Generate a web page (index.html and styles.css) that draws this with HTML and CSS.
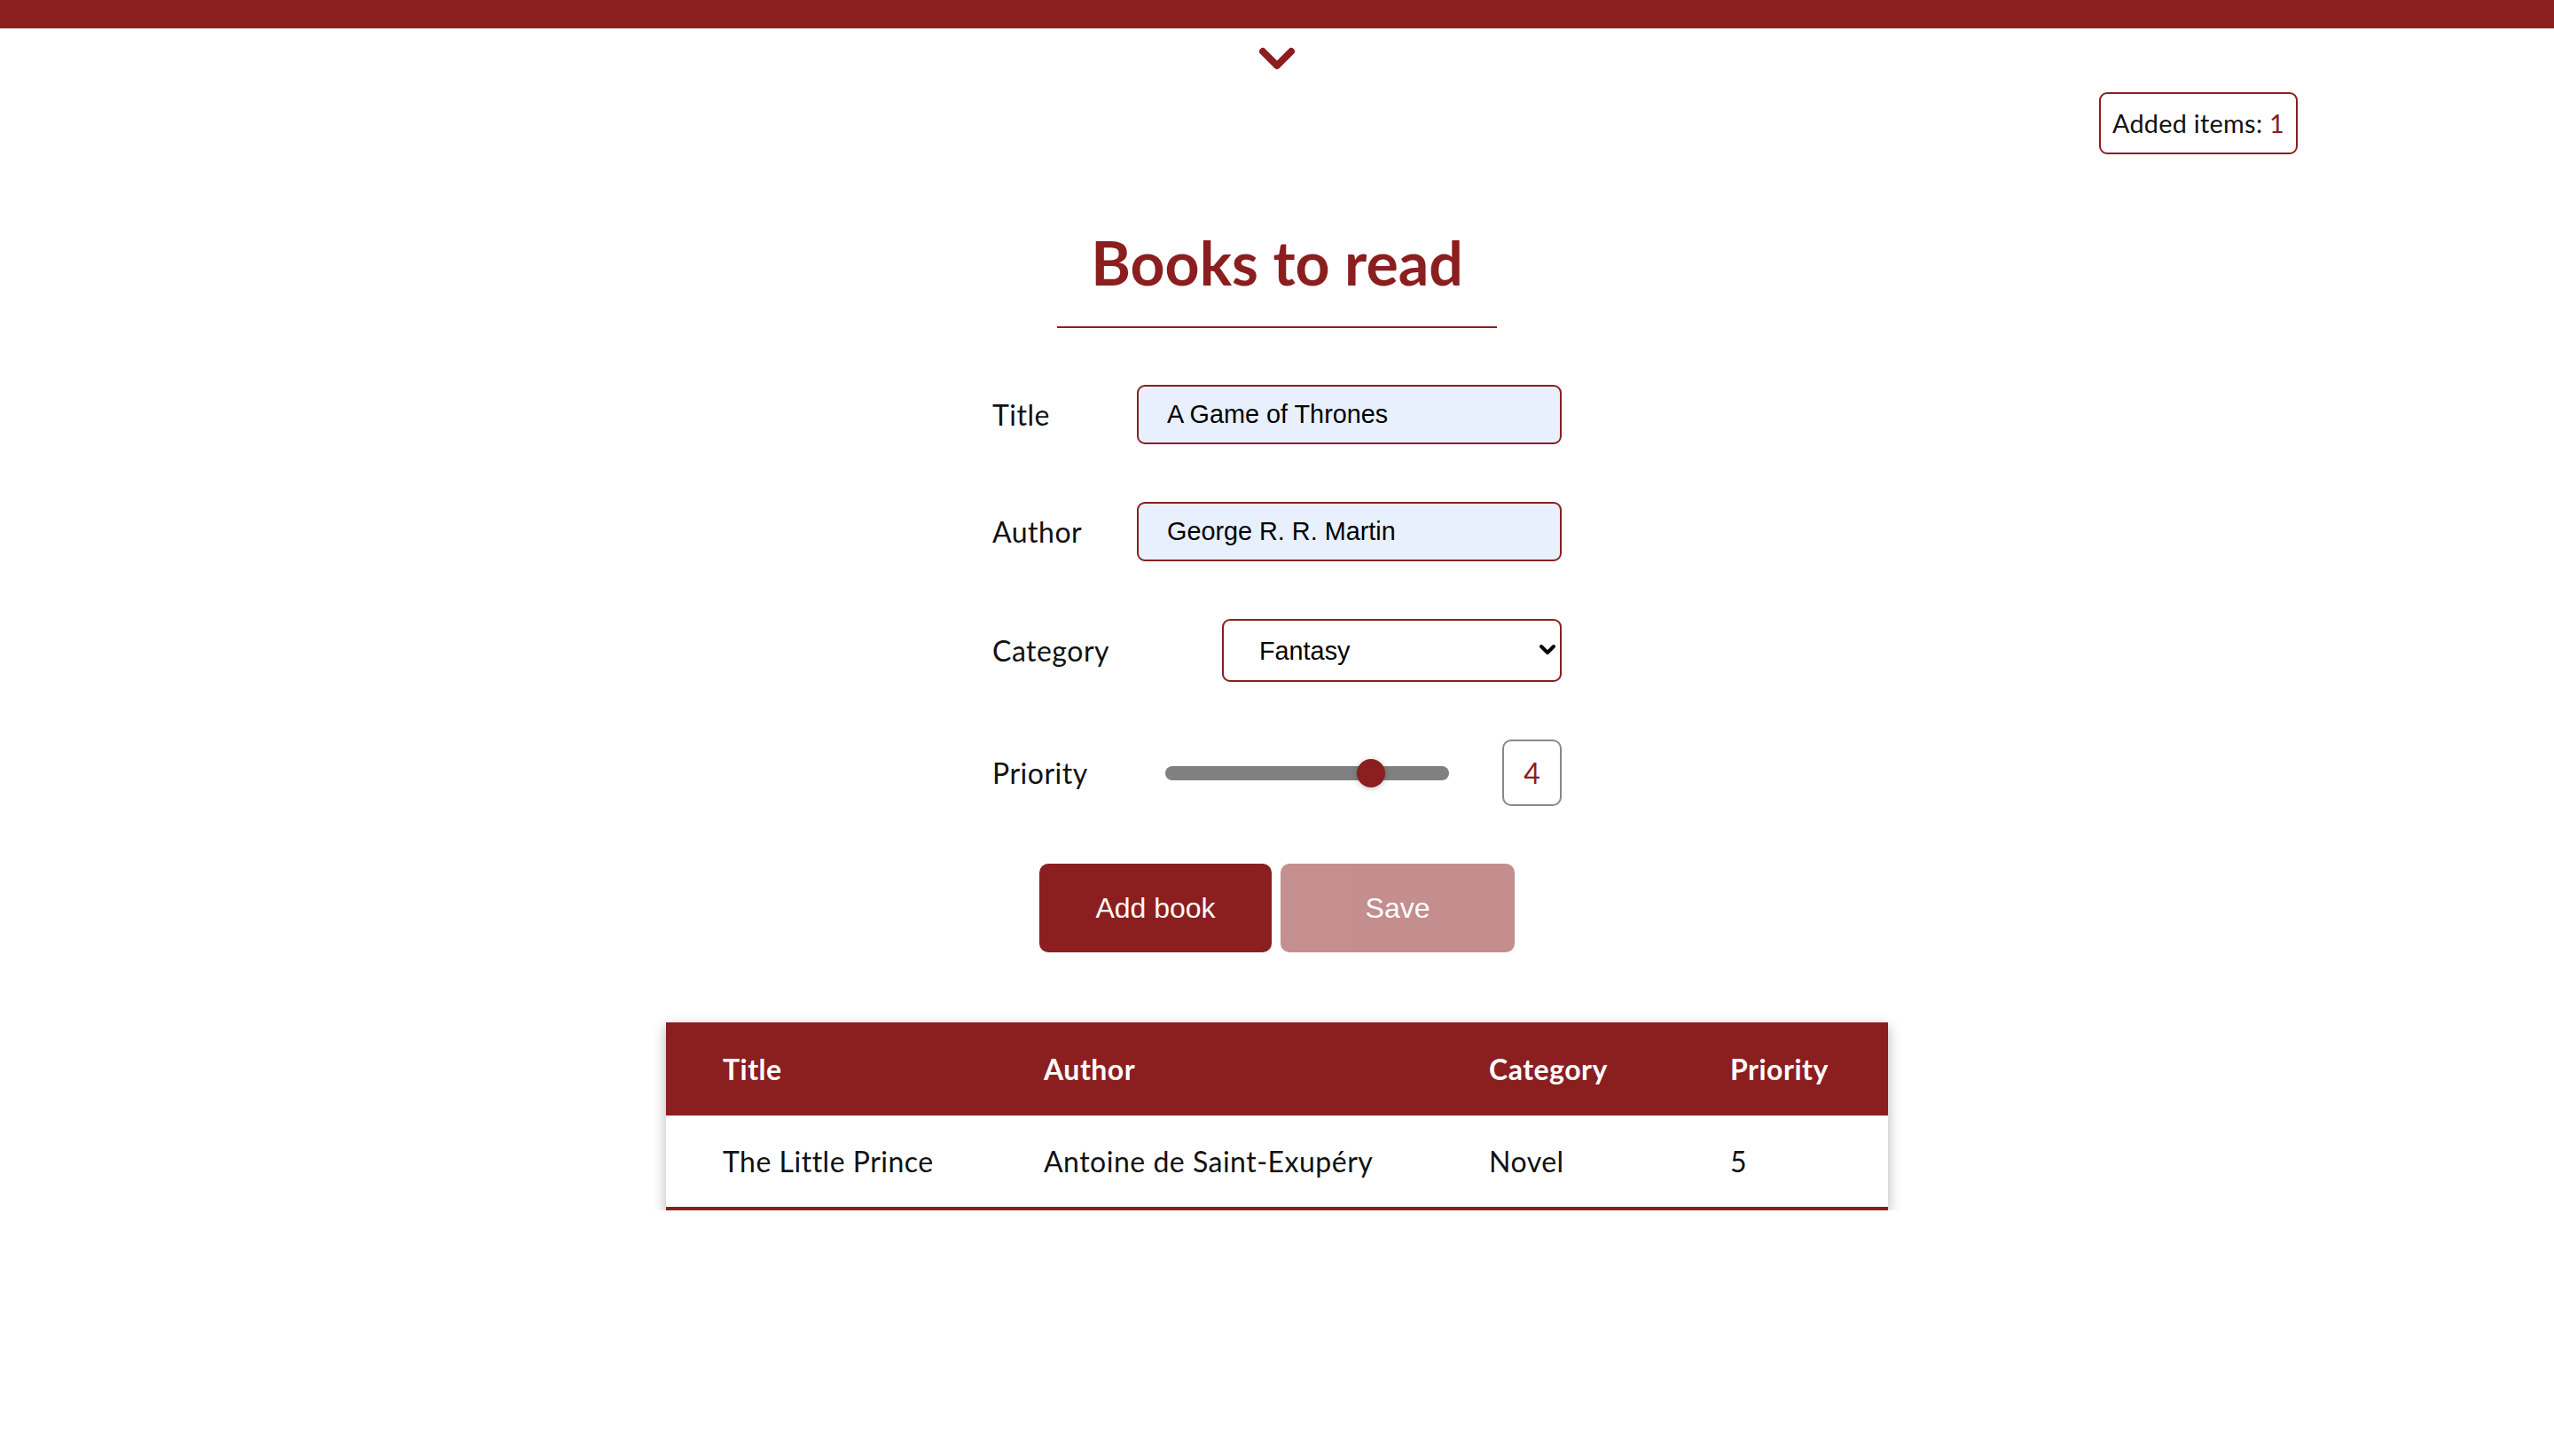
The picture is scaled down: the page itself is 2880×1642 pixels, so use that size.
FILE: index.html
```html
<!DOCTYPE html>
<html lang="en">
<head>
<meta charset="utf-8">
<title>Books to read</title>
<link rel="stylesheet" href="styles.css">
</head>
<body>
<div class="topbar"></div>
<div class="toggle">
  <svg class="chevron" width="44" height="32" viewBox="0 0 44 32"><path d="M6 8 L22 24 L38 8" fill="none" stroke="#8b1e1f" stroke-width="8" stroke-linecap="round" stroke-linejoin="round"/></svg>
</div>
<div class="counter-row">
  <div class="counter">Added items: <span class="count">1</span></div>
</div>
<h1 class="heading">Books to read</h1>
<form class="book-form">
  <div class="field">
    <label class="label" for="title">Title</label>
    <input class="text-input" id="title" type="text" value="A Game of Thrones">
  </div>
  <div class="field">
    <label class="label" for="author">Author</label>
    <input class="text-input" id="author" type="text" value="George R. R. Martin">
  </div>
  <div class="field">
    <label class="label" for="category">Category</label>
    <div class="select-wrap">
      <select class="select" id="category">
        <option>Fantasy</option>
        <option>Novel</option>
        <option>Science fiction</option>
      </select>
      <svg class="select-arrow" width="22" height="16" viewBox="0 0 22 16"><path d="M4 4 L11 11 L18 4" fill="none" stroke="#000" stroke-width="4" stroke-linecap="round" stroke-linejoin="round"/></svg>
    </div>
  </div>
  <div class="field">
    <label class="label" for="priority">Priority</label>
    <input class="range" id="priority" type="range" min="1" max="5" value="4">
    <div class="range-value">4</div>
  </div>
  <div class="actions">
    <button type="button" class="btn btn-primary">Add book</button>
    <button type="button" class="btn btn-disabled">Save</button>
  </div>
</form>
<table class="books">
  <thead>
    <tr><th class="c1">Title</th><th class="c2">Author</th><th class="c3">Category</th><th class="c4">Priority</th></tr>
  </thead>
  <tbody>
    <tr><td>The Little Prince</td><td>Antoine de Saint-Exupéry</td><td>Novel</td><td>5</td></tr>
  </tbody>
</table>
</body>
</html>
```
FILE: styles.css
```css
* { box-sizing: border-box; }
html, body { margin: 0; padding: 0; background: #fff; }
body {
  font-family: "Lato", "Open Sans", sans-serif;
  color: #000;
}
.topbar { height: 32px; background: #8b1e1f; }
.toggle {
  display: flex;
  justify-content: center;
  padding-top: 18px;
}
.chevron { display: block; }
.counter-row {
  display: flex;
  justify-content: flex-end;
  padding-right: 289px;
  margin-top: 22px;
}
.counter {
  width: 224px;
  height: 70px;
  border: 2px solid #8b1e1f;
  border-radius: 9px;
  font-size: 28.8px;
  line-height: 66px;
  text-align: center;
  color: #111;
  letter-spacing: 0.3px;
}
.count { color: #8b1e1f; }
.heading {
  width: 496px;
  margin: 82px auto 0;
  padding-bottom: 32px;
  border-bottom: 2px solid #8b1e1f;
  text-align: center;
  color: #8b1e1f;
  font-size: 68px;
  line-height: 80px;
  font-weight: 700;
}
.book-form {
  width: 642px;
  margin: 64px auto 0;
  display: flex;
  flex-direction: column;
  gap: 65px;
}
.field {
  display: flex;
  align-items: center;
  justify-content: space-between;
}
.label { font-size: 32px; color: #111; letter-spacing: 0.5px; }
.text-input {
  width: 479px;
  height: 67px;
  border: 2px solid #8b1e1f;
  border-radius: 9px;
  background: #e8f0fe;
  padding: 0 0 0 32px;
  font-family: "Liberation Sans", Arial, sans-serif;
  font-size: 28.8px;
  color: #000;
  outline: none;
}
.select-wrap {
  position: relative;
  width: 383px;
  height: 71px;
}
.select {
  -webkit-appearance: none;
  appearance: none;
  width: 100%;
  height: 100%;
  border: 2px solid #8b1e1f;
  border-radius: 9px;
  background: #fff;
  padding: 0 40px 0 40px;
  font-family: "Liberation Sans", Arial, sans-serif;
  font-size: 28.8px;
  color: #000;
  outline: none;
}
.select-arrow {
  position: absolute;
  right: 5px;
  top: 27px;
  pointer-events: none;
}
.range {
  -webkit-appearance: none;
  appearance: none;
  width: 320px;
  height: 16px;
  margin: 0 60px 0 auto;
  border-radius: 8px;
  background: #808080;
  outline: none;
}
.range::-webkit-slider-thumb {
  -webkit-appearance: none;
  appearance: none;
  width: 32px;
  height: 32px;
  border-radius: 50%;
  background: #8b1e1f;
  border: none;
  box-shadow: 0 1px 6px rgba(0,0,0,0.25);
}
.range-value {
  width: 67px;
  height: 75px;
  border: 2px solid #888;
  border-radius: 10px;
  display: flex;
  align-items: center;
  justify-content: center;
  font-size: 32px;
  color: #8b1e1f;
}
.actions {
  display: flex;
  justify-content: center;
  gap: 10px;
}
.btn {
  height: 100px;
  border: none;
  border-radius: 10px;
  color: #fff;
  font-family: "Liberation Sans", Arial, sans-serif;
  font-size: 32px;
  background: #8b1e1f;
}
.btn-primary { width: 262px; }
.btn-disabled { width: 264px; opacity: 0.5; }
.books {
  width: 1378px;
  margin: 79px auto 0;
  border-collapse: collapse;
  table-layout: fixed;
  box-shadow: 0 5px 14px rgba(0,0,0,0.3);
  border-bottom: 4px solid #8b1e1f;
  font-size: 32px;
  letter-spacing: 0.5px;
}
.books th, .books td {
  height: 105px;
  padding: 0 0 0 64px;
  text-align: left;
  vertical-align: middle;
}
.books th {
  background: #8b1e1f;
  color: #fff;
  font-weight: 700;
}
.books td { color: #111; background: #fff; }
.c1 { width: 362px; }
.c2 { width: 502px; }
.c3 { width: 272px; }
.c4 { width: 242px; }
```
